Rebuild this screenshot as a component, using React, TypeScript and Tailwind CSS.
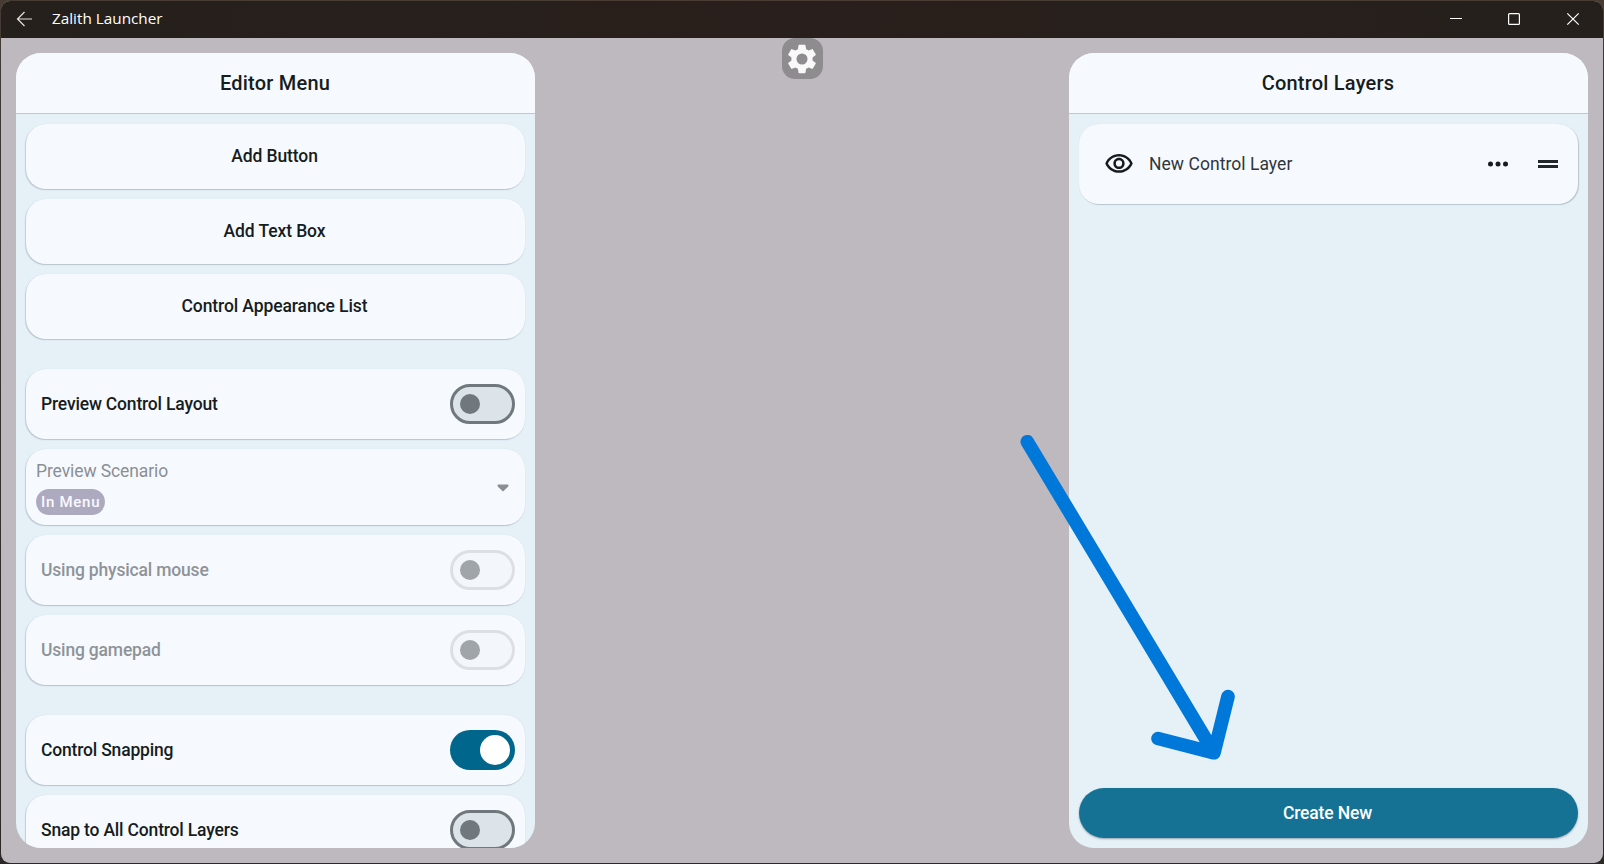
import React from 'react';

const FONT = "font-['Roboto','Liberation_Sans',sans-serif]";

const CARD =
  'shrink-0 rounded-[20px] bg-[#f6faff] shadow-[-1px_1px_1px_rgba(70,85,100,0.2),0_0_1px_rgba(70,85,100,0.14),0_1px_1px_rgba(70,85,100,0.08)]';

function ActionCard({ label, spacing = '' }: { label: string; spacing?: string }) {
  return (
    <button className={`${CARD} flex h-[65px] items-center justify-center pr-[2px] pb-px text-[17.5px] font-medium tracking-[-0.1px] text-[#171c20] ${spacing}`}>
      {label}
    </button>
  );
}

function Switch({ on = false, disabled = false }: { on?: boolean; disabled?: boolean }) {
  if (on) {
    return (
      <span className="flex h-10 w-[65px] shrink-0 items-center justify-end rounded-full bg-[#00668b] pr-[5px]">
        <span className="size-[30px] rounded-full bg-white" />
      </span>
    );
  }
  return (
    <span
      className={`flex h-10 w-[65px] shrink-0 items-center rounded-full border-[3px] pl-[7px] ${
        disabled ? 'border-[#dce0e4] bg-[#f3f6fb]' : 'border-[#70787d] bg-[#dce3e9]'
      }`}
    >
      <span className={`size-5 rounded-full ${disabled ? 'bg-[#a0a5a9]' : 'bg-[#70787e]'}`} />
    </span>
  );
}

function SwitchCard({ label, on, disabled }: { label: string; on?: boolean; disabled?: boolean }) {
  return (
    <div className={`${CARD} flex h-[70px] items-center justify-between pr-2.5 pl-[15px]`}>
      <span className={`text-[17.5px] font-medium tracking-[-0.18px] ${disabled ? 'text-[#8f9397]' : 'text-[#171c20]'}`}>{label}</span>
      <Switch on={on} disabled={disabled} />
    </div>
  );
}

function Panel({ title, children }: { title: string; children: React.ReactNode }) {
  return (
    <section className="flex h-[795px] w-[519px] flex-col overflow-hidden rounded-[25px] bg-[#e5f0f7]">
      <header className="flex h-[61px] shrink-0 items-center justify-center border-b border-[#bfc8ce] bg-[#f6faff] pr-px text-[20px] font-medium tracking-[0.22px] text-[#171c20]">
        {title}
      </header>
      <div className="flex min-h-0 flex-1 flex-col gap-2.5 p-2.5">{children}</div>
    </section>
  );
}

function TitleBar() {
  return (
    <div className="flex h-[37px] shrink-0 items-center bg-linear-to-r from-[#25201b] via-[#291f1c] to-[#25201b] text-white">
      <svg className="mb-px ml-[15px]" width="18" height="16" viewBox="0 0 18 16" fill="none" stroke="#e4e2e0" strokeWidth="1.2">
        <path d="M16 8H1.5M8.5 1L1.5 8l7 7" />
      </svg>
      <span className="ml-[18px] flex-1 pb-0.5 font-['Open_Sans','Noto_Sans',sans-serif] text-[15.3px]">Zalith Launcher</span>
      <svg className="mr-[23px] mb-px" width="130" height="14" viewBox="0 0 130 14" fill="none" stroke="#fff" strokeWidth="1.2">
        <path d="M0 6.5h12" />
        <rect x="58.6" y="1.6" width="10.8" height="10.8" rx="1" />
        <path d="M117.3 1.3l11.4 11.4M128.7 1.3L117.3 12.7" />
      </svg>
    </div>
  );
}

export default function App() {
  return (
    <div className={`relative flex h-[864px] w-[1604px] overflow-hidden bg-linear-to-b from-[#483c33] via-[#3b3938] via-10% to-[#2b2928] p-px ${FONT}`}>
      <main className="flex flex-1 flex-col overflow-hidden rounded-[9px] bg-[#beb9bf]">
        <TitleBar />
        <div className="flex flex-1 items-start justify-between pr-[15px] pl-[15px]">
          <div className="pt-[15px]">
            <Panel title="Editor Menu">
              <ActionCard label="Add Button" />
              <ActionCard label="Add Text Box" />
              <ActionCard label="Control Appearance List" spacing="mb-5" />
              <SwitchCard label="Preview Control Layout" />
              <div className={`${CARD} flex h-[76px] items-center justify-between pr-[16.5px] pl-2.5`}>
                <div className="flex flex-col items-start gap-[7px]">
                  <span className="text-[17.5px] leading-[22px] tracking-[-0.1px] text-[#8b8f93]">Preview Scenario</span>
                  <span className="flex h-[26px] items-center rounded-full bg-[#adaac0] px-[5px] pt-px text-[15px] font-medium tracking-[0.72px] text-[#f8f9fe]">
                    In Menu
                  </span>
                </div>
                <svg className="mt-0.5" width="12" height="8" viewBox="0 0 12 8" fill="#8b8f93">
                  <path d="M1.2 0.5h9.6c.6 0 .9.7.5 1.2v.8L6.6 7.1a.8.8 0 0 1-1.2 0L.7 2.5v-.8C.3 1.2.6.5 1.2.5z" />
                </svg>
              </div>
              <SwitchCard label="Using physical mouse" disabled />
              <div className="mb-5 flex shrink-0 flex-col">
                <SwitchCard label="Using gamepad" disabled />
              </div>
              <SwitchCard label="Control Snapping" on />
              <SwitchCard label="Snap to All Control Layers" />
            </Panel>
          </div>

          <button className="flex size-[41px] items-center justify-center rounded-[13px] bg-[#8e8c8f]" aria-label="Settings">
            <svg width="34" height="34" viewBox="0 0 24 24" fill="#f9f9f9">
              <path d="M19.43 12.98c.04-.32.07-.64.07-.98s-.03-.66-.07-.98l2.11-1.65c.19-.15.24-.42.12-.64l-2-3.46c-.12-.22-.39-.3-.61-.22l-2.49 1c-.52-.4-1.08-.73-1.69-.98l-.38-2.65C14.46 2.18 14.25 2 14 2h-4c-.25 0-.46.18-.49.42l-.38 2.65c-.61.25-1.17.59-1.69.98l-2.49-1c-.23-.09-.49 0-.61.22l-2 3.46c-.13.22-.07.49.12.64l2.11 1.65c-.04.32-.07.65-.07.98s.03.66.07.98l-2.11 1.65c-.19.15-.24.42-.12.64l2 3.46c.12.22.39.3.61.22l2.49-1c.52.4 1.08.73 1.69.98l.38 2.65c.03.24.24.42.49.42h4c.25 0 .46-.18.49-.42l.38-2.65c.61-.25 1.17-.59 1.69-.98l2.49 1c.23.09.49 0 .61-.22l2-3.46c.12-.22.07-.49-.12-.64l-2.11-1.65zM12 15.9a3.9 3.9 0 1 1 0-7.8 3.9 3.9 0 0 1 0 7.8z" />
            </svg>
          </button>

          <div className="pt-[15px]">
            <Panel title="Control Layers">
              <div className="flex h-20 shrink-0 items-center rounded-[20px] bg-[#f6faff] pr-5 pl-[25px] shadow-[1px_1px_1px_rgba(70,85,100,0.26),0_0_1px_rgba(70,85,100,0.14)]">
                <svg width="30" height="30" viewBox="0 0 24 24" fill="#171c20">
                  <path d="M12 6c3.79 0 7.17 2.13 8.82 5.5C19.17 14.87 15.79 17 12 17s-7.17-2.13-8.82-5.5C4.83 8.13 8.21 6 12 6m0-2C7 4 2.73 7.11 1 11.5 2.73 15.89 7 19 12 19s9.27-3.11 11-7.5C21.27 7.11 17 4 12 4zm0 5a2.5 2.5 0 0 1 0 5 2.5 2.5 0 0 1 0-5m0-2c-2.48 0-4.5 2.02-4.5 4.5S9.52 16 12 16s4.5-2.02 4.5-4.5S14.48 7 12 7z" />
                </svg>
                <span className="ml-[15px] flex-1 text-[17.5px] tracking-[0.05px] text-[#30363a]">New Control Layer</span>
                <svg className="mr-[30px]" width="20" height="6" viewBox="0 0 20 6" fill="#171c20">
                  <circle cx="2.5" cy="3" r="2.5" />
                  <circle cx="10" cy="3" r="2.5" />
                  <circle cx="17.5" cy="3" r="2.5" />
                </svg>
                <svg width="20" height="8" viewBox="0 0 20 8" fill="#22272b">
                  <path d="M0 0h20v3H0zM0 5h20v3H0z" />
                </svg>
              </div>
              <button className="mt-auto flex h-[50px] shrink-0 items-center justify-center rounded-full bg-[#167295] pr-[2px] text-[17.5px] font-medium tracking-[-0.15px] text-white shadow-[0_1px_2px_rgba(50,65,80,0.45)]">
                Create New
              </button>
            </Panel>
          </div>
        </div>
      </main>

      <svg
        className="pointer-events-none absolute top-[430px] left-[1010px]"
        width="240"
        height="340"
        viewBox="1010 430 240 340"
        fill="none"
        stroke="#0078d9"
        strokeWidth="13.6"
        strokeLinecap="round"
        strokeLinejoin="round"
      >
        <path d="M1027.3 441.7L1214 752.8M1158 738.5L1214 752.8L1228 696.5" />
      </svg>
    </div>
  );
}
